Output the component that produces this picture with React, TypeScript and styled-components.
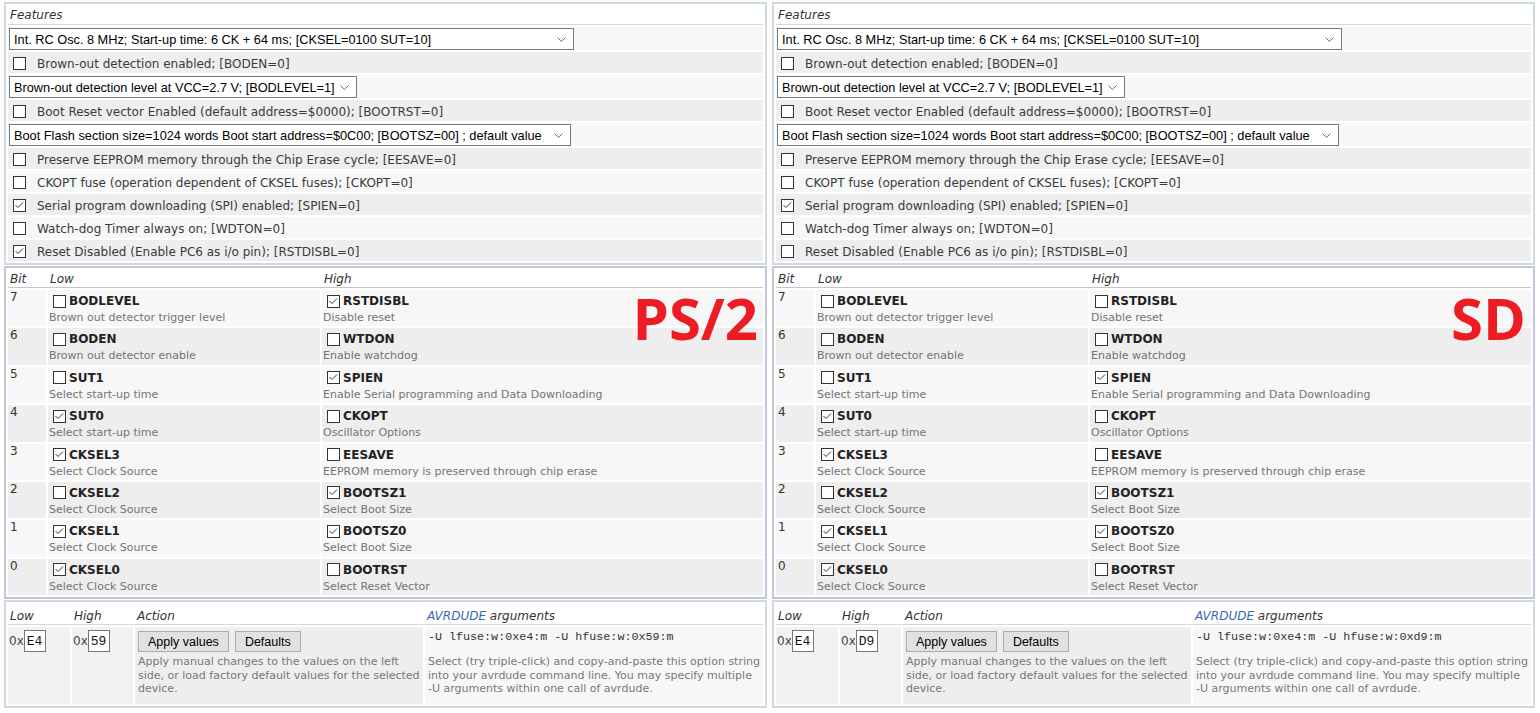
import React from 'react';
import styled, { createGlobalStyle } from 'styled-components';

const GlobalStyle = createGlobalStyle`
  html, body { margin: 0; padding: 0; background: #ffffff; }
  body {
    font-family: "DejaVu Sans", Verdana, sans-serif;
    font-size: 12px;
    color: #333333;
  }
  * { box-sizing: border-box; }
`;

const TEAL = '#cddbdb';
const VIOLET = '#c4c4da';
const LIGHT = '#f7f7f7';
const GREY = '#eeeeee';

const Page = styled.div`
  display: flex;
  gap: 5px;
  padding: 2px 4px;
  width: 1540px;
  height: 713px;
`;

const Panel = styled.div`
  width: 763px;
  display: flex;
  flex-direction: column;
  gap: 1px;
`;

const Box = styled.div<{ $tone: 'teal' | 'violet' }>`
  position: relative;
  border: 2px solid ${(p) => (p.$tone === 'violet' ? VIOLET : TEAL)};
  padding: 2px;
  display: flex;
  flex-direction: column;
  gap: 2px;
`;

const HeadRow = styled.div<{ $cols: string; $line: string; $h: number; $top?: number }>`
  display: grid;
  grid-template-columns: ${(p) => p.$cols};
  column-gap: 2px;
  height: ${(p) => p.$h}px;
  padding-top: ${(p) => p.$top ?? 0}px;
  border-bottom: 1px solid ${(p) => p.$line};
  align-items: center;
  font-style: italic;
  color: #333333;
`;

const HeadCell = styled.div`
  padding-left: 2px;
  white-space: nowrap;
`;

const Avr = styled.span`
  color: #3b67b0;
`;

/* ---------- Features ---------- */

const FeatureRow = styled.div<{ $tall: boolean; $shade: boolean }>`
  display: flex;
  align-items: center;
  height: ${(p) => (p.$tall ? 23 : 21)}px;
  padding-left: 1px;
  background: ${(p) => (p.$shade ? GREY : LIGHT)};
`;

const SelectWrap = styled.div<{ $w: number }>`
  position: relative;
  width: ${(p) => p.$w}px;
  height: 22px;
  margin-top: 1px;
`;

const Select = styled.select`
  appearance: none;
  -webkit-appearance: none;
  width: 100%;
  height: 22px;
  margin: 0;
  border: 1px solid #7a7a7a;
  border-radius: 0;
  background: #ffffff;
  padding: 0 12px 0 4px;
  font-family: "Liberation Sans", Arial, sans-serif;
  font-size: 12.75px;
  color: #000000;
  outline: none;
`;

const ChevronMark = styled.svg`
  position: absolute;
  right: 8px;
  top: 9px;
  pointer-events: none;
`;

const CheckLabel = styled.label`
  display: flex;
  align-items: center;
  gap: 11px;
  padding: 2px 0 0 4px;
  color: #3a3a3a;
  white-space: nowrap;
`;

const BoxMark = styled.span`
  display: inline-flex;
  width: 13px;
  height: 13px;
  flex: none;
  border: 1px solid #333333;
  background: #ffffff;
`;

const Check: React.FC<{ on: boolean }> = ({ on }) => (
  <BoxMark>
    {on && (
      <svg width="11" height="11" viewBox="0 0 11 11">
        <path d="M1.5 5 L4 7.5 L9 2.5" fill="none" stroke="#333333" strokeWidth="1" />
      </svg>
    )}
  </BoxMark>
);

/* ---------- Bits ---------- */

const BITS_COLS = '38px 272px 1fr';

const BitsRow = styled.div`
  display: grid;
  grid-template-columns: ${BITS_COLS};
  column-gap: 2px;
  height: 36.4px;
`;

const BitCell = styled.div<{ $shade: boolean }>`
  background: ${(p) => (p.$shade ? GREY : LIGHT)};
  padding: 0 2px;
  line-height: 15px;
  color: #333333;
`;

const FuseCell = styled.div<{ $shade: boolean }>`
  background: ${(p) => (p.$shade ? GREY : LIGHT)};
  padding: 3px 1px 0;
`;

const FuseTop = styled.div`
  display: flex;
  align-items: center;
  gap: 3px;
  height: 16px;
  padding-left: 4px;
  font-weight: bold;
  color: #222222;
`;

const FuseDesc = styled.div`
  margin-top: 2px;
  font-size: 11px;
  line-height: 13px;
  color: #747474;
  white-space: nowrap;
`;

const BigTag = styled.div`
  position: absolute;
  right: 7px;
  top: 21px;
  font-family: "Open Sans", sans-serif;
  font-weight: 700;
  font-size: 58px;
  line-height: 1;
  color: #ed1c24;
  pointer-events: none;
`;

/* ---------- Values ---------- */

const VAL_COLS = '62px 61px 288px 1fr';

const ValRow = styled.div`
  display: grid;
  grid-template-columns: ${VAL_COLS};
  column-gap: 2px;
  height: 77px;
`;

const HexCell = styled.div`
  display: flex;
  align-items: flex-start;
  padding: 3px 1px 0;
  background: #f2f2f2;
  color: #444444;
  line-height: 22px;
`;

const HexInput = styled.input`
  width: 22px;
  height: 22px;
  margin: 0;
  padding: 0 2px;
  border: 1px solid #767676;
  border-radius: 0;
  background: #ffffff;
  font-family: "Liberation Mono", "Courier New", monospace;
  font-size: 13px;
  color: #111111;
  outline: none;
`;

const ActionCell = styled.div`
  background: ${GREY};
  padding: 4px 2px 0 3px;
`;

const ButtonBar = styled.div`
  display: flex;
  gap: 6px;
`;

const Button = styled.button`
  height: 21px;
  padding: 0 9px;
  margin: 0;
  border: 1px solid #adadad;
  border-radius: 0;
  background: #e1e1e1;
  font-family: "Liberation Sans", Arial, sans-serif;
  font-size: 12.5px;
  color: #000000;
`;

const SmallNote = styled.div<{ $top: number }>`
  margin-top: ${(p) => p.$top}px;
  font-size: 11px;
  line-height: 13.4px;
  color: #777777;
  white-space: nowrap;
`;

const ArgCell = styled.div`
  background: ${LIGHT};
  padding: 2px 2px 0 3px;
`;

const ArgLine = styled.div`
  font-family: "Liberation Mono", "Courier New", monospace;
  font-size: 11.7px;
  line-height: 16px;
  color: #333333;
  white-space: nowrap;
`;

/* ---------- data ---------- */

type Feature =
  | { kind: 'select'; text: string; width: number }
  | { kind: 'check'; text: string; on: boolean };

type Fuse = { name: string; desc: string };

const LOW: Fuse[] = [
  { name: 'BODLEVEL', desc: 'Brown out detector trigger level' },
  { name: 'BODEN', desc: 'Brown out detector enable' },
  { name: 'SUT1', desc: 'Select start-up time' },
  { name: 'SUT0', desc: 'Select start-up time' },
  { name: 'CKSEL3', desc: 'Select Clock Source' },
  { name: 'CKSEL2', desc: 'Select Clock Source' },
  { name: 'CKSEL1', desc: 'Select Clock Source' },
  { name: 'CKSEL0', desc: 'Select Clock Source' },
];

const HIGH: Fuse[] = [
  { name: 'RSTDISBL', desc: 'Disable reset' },
  { name: 'WTDON', desc: 'Enable watchdog' },
  { name: 'SPIEN', desc: 'Enable Serial programming and Data Downloading' },
  { name: 'CKOPT', desc: 'Oscillator Options' },
  { name: 'EESAVE', desc: 'EEPROM memory is preserved through chip erase' },
  { name: 'BOOTSZ1', desc: 'Select Boot Size' },
  { name: 'BOOTSZ0', desc: 'Select Boot Size' },
  { name: 'BOOTRST', desc: 'Select Reset Vector' },
];

const features = (rstdisbl: boolean): Feature[] => [
  { kind: 'select', text: 'Int. RC Osc. 8 MHz; Start-up time: 6 CK + 64 ms; [CKSEL=0100 SUT=10]', width: 565 },
  { kind: 'check', text: 'Brown-out detection enabled; [BODEN=0]', on: false },
  { kind: 'select', text: 'Brown-out detection level at VCC=2.7 V; [BODLEVEL=1]', width: 348 },
  { kind: 'check', text: 'Boot Reset vector Enabled (default address=$0000); [BOOTRST=0]', on: false },
  { kind: 'select', text: 'Boot Flash section size=1024 words Boot start address=$0C00; [BOOTSZ=00] ; default value', width: 562 },
  { kind: 'check', text: 'Preserve EEPROM memory through the Chip Erase cycle; [EESAVE=0]', on: false },
  { kind: 'check', text: 'CKOPT fuse (operation dependent of CKSEL fuses); [CKOPT=0]', on: false },
  { kind: 'check', text: 'Serial program downloading (SPI) enabled; [SPIEN=0]', on: true },
  { kind: 'check', text: 'Watch-dog Timer always on; [WDTON=0]', on: false },
  { kind: 'check', text: 'Reset Disabled (Enable PC6 as i/o pin); [RSTDISBL=0]', on: rstdisbl },
];

type PanelData = { tag: string; low: number; high: number };

const PANELS: PanelData[] = [
  { tag: 'PS/2', low: 0xe4, high: 0x59 },
  { tag: 'SD', low: 0xe4, high: 0xd9 },
];

const hex = (n: number) => n.toString(16).toUpperCase().padStart(2, '0');

const Chevron = () => (
  <ChevronMark width="9" height="5" viewBox="0 0 9 5">
    <path d="M0.5 0.5 L4.5 4.5 L8.5 0.5" fill="none" stroke="#6d6d6d" strokeWidth="1" />
  </ChevronMark>
);

const FuserPanel: React.FC<{ data: PanelData }> = ({ data }) => {
  const rst = ((data.high >> 7) & 1) === 0;
  const feats = features(rst);
  return (
    <Panel>
      <Box $tone="teal">
        <HeadRow $cols="1fr" $line={TEAL} $h={19}>
          <HeadCell>Features</HeadCell>
        </HeadRow>
        {feats.map((f, i) => (
          <FeatureRow key={i} $tall={f.kind === 'select'} $shade={i % 2 === 1}>
            {f.kind === 'select' ? (
              <SelectWrap $w={f.width}>
                <Select defaultValue="0">
                  <option value="0">{f.text}</option>
                </Select>
                <Chevron />
              </SelectWrap>
            ) : (
              <CheckLabel>
                <Check on={f.on} />
                <span>{f.text}</span>
              </CheckLabel>
            )}
          </FeatureRow>
        ))}
      </Box>

      <Box $tone="violet">
        <HeadRow $cols={BITS_COLS} $line={VIOLET} $h={18}>
          <HeadCell>Bit</HeadCell>
          <HeadCell>Low</HeadCell>
          <HeadCell>High</HeadCell>
        </HeadRow>
        {LOW.map((lf, i) => {
          const bit = 7 - i;
          const hf = HIGH[i];
          const shade = i % 2 === 1;
          const lowOn = ((data.low >> bit) & 1) === 0;
          const highOn = ((data.high >> bit) & 1) === 0;
          return (
            <BitsRow key={bit}>
              <BitCell $shade={shade}>{bit}</BitCell>
              <FuseCell $shade={shade}>
                <FuseTop>
                  <Check on={lowOn} />
                  <span>{lf.name}</span>
                </FuseTop>
                <FuseDesc>{lf.desc}</FuseDesc>
              </FuseCell>
              <FuseCell $shade={shade}>
                <FuseTop>
                  <Check on={highOn} />
                  <span>{hf.name}</span>
                </FuseTop>
                <FuseDesc>{hf.desc}</FuseDesc>
              </FuseCell>
            </BitsRow>
          );
        })}
        <BigTag>{data.tag}</BigTag>
      </Box>

      <Box $tone="teal">
        <HeadRow $cols={VAL_COLS} $line={TEAL} $h={21} $top={4}>
          <HeadCell>Low</HeadCell>
          <HeadCell>High</HeadCell>
          <HeadCell>Action</HeadCell>
          <HeadCell>
            <Avr>AVRDUDE</Avr> arguments
          </HeadCell>
        </HeadRow>
        <ValRow>
          <HexCell>
            <span>0x</span>
            <HexInput defaultValue={hex(data.low)} readOnly />
          </HexCell>
          <HexCell>
            <span>0x</span>
            <HexInput defaultValue={hex(data.high)} readOnly />
          </HexCell>
          <ActionCell>
            <ButtonBar>
              <Button type="button">Apply values</Button>
              <Button type="button">Defaults</Button>
            </ButtonBar>
            <SmallNote $top={3}>
              Apply manual changes to the values on the left
              <br />
              side, or load factory default values for the selected
              <br />
              device.
            </SmallNote>
          </ActionCell>
          <ArgCell>
            <ArgLine>
              -U lfuse:w:0x{hex(data.low).toLowerCase()}:m -U hfuse:w:0x{hex(data.high).toLowerCase()}:m
            </ArgLine>
            <SmallNote $top={10}>
              Select (try triple-click) and copy-and-paste this option string
              <br />
              into your avrdude command line. You may specify multiple
              <br />
              -U arguments within one call of avrdude.
            </SmallNote>
          </ArgCell>
        </ValRow>
      </Box>
    </Panel>
  );
};

export default function App() {
  return (
    <>
      <GlobalStyle />
      <Page>
        {PANELS.map((p) => (
          <FuserPanel key={p.tag} data={p} />
        ))}
      </Page>
    </>
  );
}
